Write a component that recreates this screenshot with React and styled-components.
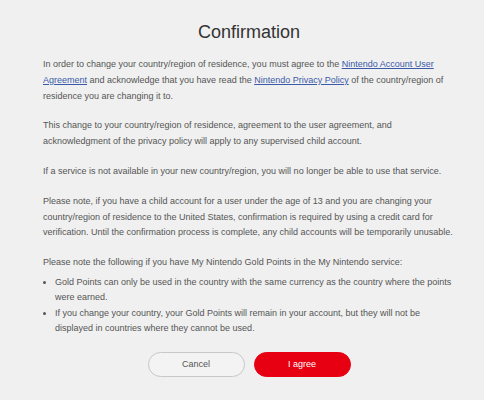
import React from 'react'
import styled, { createGlobalStyle } from 'styled-components'

const GlobalStyle = createGlobalStyle`
    html, body {
        margin: 0;
        padding: 0;
        background: #f0f0f0;
    }
`

const Pagina = styled.div`
    width: 484px;
    height: 400px;
    box-sizing: border-box;
    padding: 18px 29px 0 43px;
    background: #f0f0f0;
    font-family: "Liberation Sans", Arial, sans-serif;
    color: #555;
    overflow: hidden;
`

const Titulo = styled.h1`
    margin: 0 0 11px 0;
    text-align: center;
    font-size: 18px;
    font-weight: normal;
    color: #333;
    line-height: 28px;
`

const Paragrafo = styled.p`
    margin: 0 0 14px 0;
    font-size: 9px;
    line-height: 15.8px;
`

const Link = styled.a`
    color: #3b5ba8;
    text-decoration: underline;
`

const Lista = styled.ul`
    margin: -10px 0 0 0;
    padding: 0 0 0 12px;
    font-size: 9px;
    line-height: 15.5px;
`

const Item = styled.li`
    padding-left: 0;
`

const Botoes = styled.div`
    display: flex;
    justify-content: center;
    gap: 9px;
    margin-top: 15px;
`

const Botao = styled.button`
    width: 97px;
    height: 25px;
    border-radius: 13px;
    font-family: "Liberation Sans", Arial, sans-serif;
    font-size: 9px;
    cursor: pointer;
    border: 1px solid ${props => props.primario ? '#e60012' : '#c8c8c8'};
    background: ${props => props.primario ? '#e60012' : '#f3f3f3'};
    color: ${props => props.primario ? '#fff' : '#555'};
`

export default function App() {
    return (
        <Pagina>
            <GlobalStyle />
            <Titulo>Confirmation</Titulo>
            <Paragrafo>
                In order to change your country/region of residence, you must agree to the{' '}
                <Link href="#">Nintendo Account User Agreement</Link> and acknowledge that you have read the{' '}
                <Link href="#">Nintendo Privacy Policy</Link> of the country/region of residence you are changing it to.
            </Paragrafo>
            <Paragrafo>
                This change to your country/region of residence, agreement to the user agreement, and
                acknowledgment of the privacy policy will apply to any supervised child account.
            </Paragrafo>
            <Paragrafo>
                If a service is not available in your new country/region, you will no longer be able to use that service.
            </Paragrafo>
            <Paragrafo>
                Please note, if you have a child account for a user under the age of 13 and you are changing your
                country/region of residence to the United States, confirmation is required by using a credit card for
                verification. Until the confirmation process is complete, any child accounts will be temporarily unusable.
            </Paragrafo>
            <Paragrafo>
                Please note the following if you have My Nintendo Gold Points in the My Nintendo service:
            </Paragrafo>
            <Lista>
                <Item>Gold Points can only be used in the country with the same currency as the country where the points were earned.</Item>
                <Item>If you change your country, your Gold Points will remain in your account, but they will not be displayed in countries where they cannot be used.</Item>
            </Lista>
            <Botoes>
                <Botao>Cancel</Botao>
                <Botao primario>I agree</Botao>
            </Botoes>
        </Pagina>
    )
}
